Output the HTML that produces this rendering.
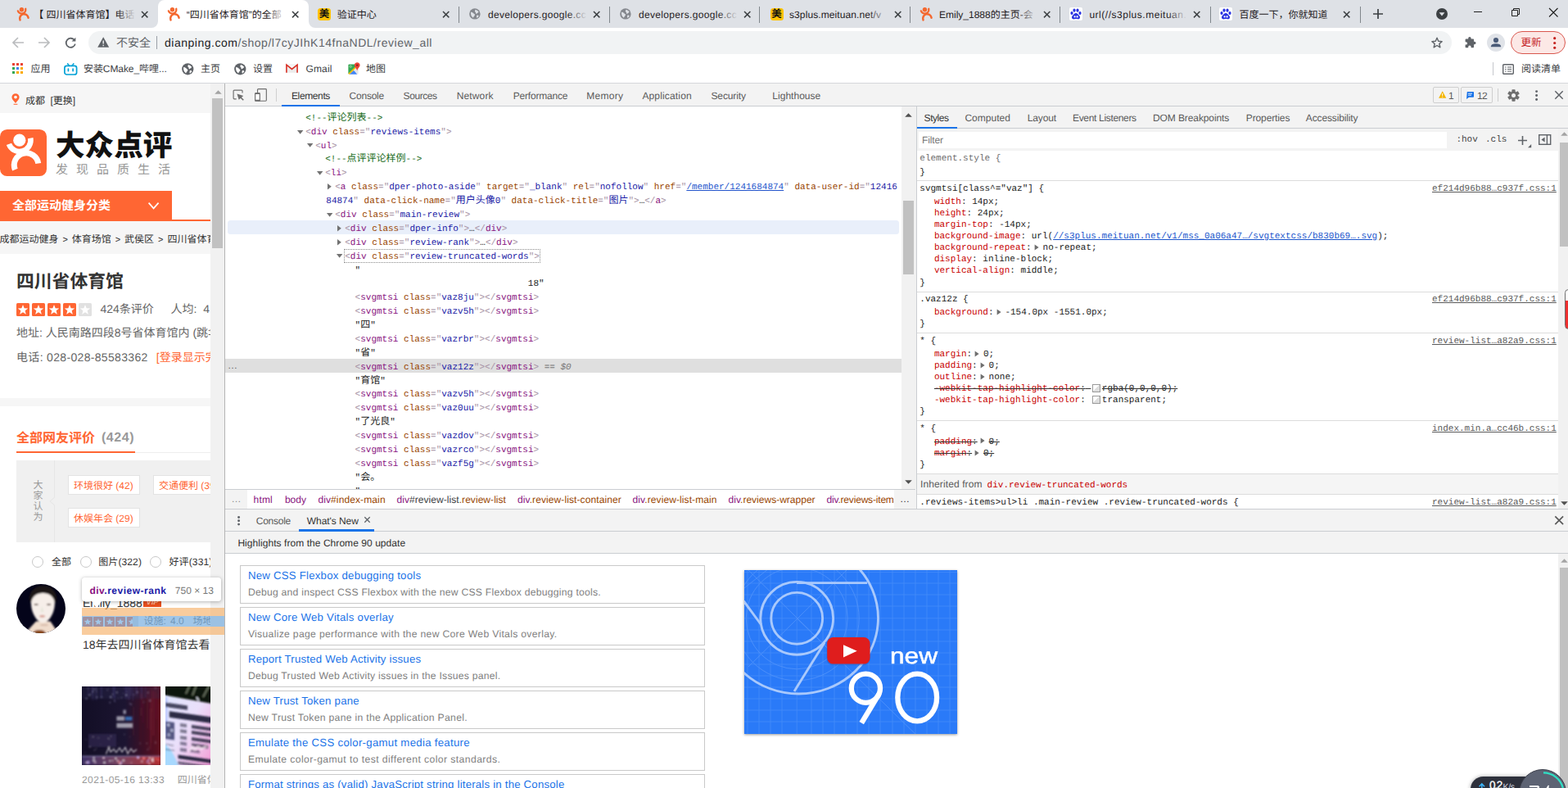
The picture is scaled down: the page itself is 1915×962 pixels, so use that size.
<!DOCTYPE html>
<html><head><meta charset="utf-8"><title>dianping devtools</title>
<style>
*{margin:0;padding:0;box-sizing:border-box}
html,body{width:1915px;height:962px;overflow:hidden;background:#fff}
body{position:relative;text-rendering:geometricPrecision;font-family:"Liberation Sans","Noto Sans CJK SC",sans-serif;font-size:12px;color:#333}
.a{position:absolute}
.t{position:absolute;white-space:nowrap;line-height:1.2;font-family:"Liberation Sans","Noto Sans CJK SC",sans-serif}
.m{position:absolute;white-space:pre;line-height:17px;font-family:"Liberation Mono","Noto Sans CJK SC",monospace;font-size:11px}
svg.i{position:absolute;overflow:visible}
.b{font-weight:bold}
/* devtools syntax colours */
.tg{color:#881280}.an{color:#994500}.av{color:#1a1aa6}.cm{color:#236e25}.br{color:#a894a6}.tx{color:#222}
.pn{color:#c80000}.pv{color:#222}.lk{color:#1a55cc;text-decoration:underline}
.src{color:#5a5a5a;text-decoration:underline}
.st{text-decoration:line-through}

</style></head>
<body>
<div class="a" style="left:0px;top:0px;width:1915px;height:34px;background:#dee1e6;"></div>
<div class="a" style="left:193px;top:0;width:184px;height:34px;background:#fff;border-radius:8px 8px 0 0"></div>
<svg class="i" style="left:185px;top:26px;" width="8" height="8" viewBox="0 0 8 8"><path d="M8 0V8H0A8 8 0 0 0 8 0Z" fill="#fff"/></svg>
<svg class="i" style="left:377px;top:26px;" width="8" height="8" viewBox="0 0 8 8"><path d="M0 0V8H8A8 8 0 0 1 0 0Z" fill="#fff"/></svg>
<div class="a" style="left:0px;top:34px;width:1915px;height:68px;background:#fff;"></div>
<div class="a" style="left:0px;top:101px;width:1915px;height:1px;background:#d5d7db;"></div>
<svg class="i" style="left:18.07px;top:6.71px" width="22" height="22" viewBox="0 0 61.97 61.97"><circle cx="23.8" cy="13.2" r="7.6" fill="#f4682f"/><path d="M10.93 17.89A13.7 13.7 0 0 0 37.27 10.68" fill="none" stroke="#f4682f" stroke-width="6.6" stroke-linecap="round"/><path d="M18.38 49.14A14.8 14.8 0 1 1 46.74 41.41" fill="none" stroke="#f4682f" stroke-width="7" stroke-linecap="round"/></svg>
<div class="a" style="left:44.5px;top:8px;width:121.5px;height:20px;overflow:hidden"><span class="t" style="left:0;top:2.64px;color:#1f2023;letter-spacing:0px"><span style="position:relative;left:-3.2px">【</span>四川省体育馆】电话</span><div class="a" style="right:0;top:0;width:24px;height:20px;background:linear-gradient(90deg,rgba(222,225,230,0),rgba(222,225,230,1))"></div></div>
<svg class="i" style="left:173.3px;top:13.6px;" width="7.4" height="7.4" viewBox="0 0 7.4 7.4"><path d="M0 0L7.4 7.4M7.4 0L0 7.4" stroke="#3c4043" stroke-width="1.5" fill="none"/></svg>
<svg class="i" style="left:201.97px;top:6.71px" width="22" height="22" viewBox="0 0 61.97 61.97"><circle cx="23.8" cy="13.2" r="7.6" fill="#f4682f"/><path d="M10.93 17.89A13.7 13.7 0 0 0 37.27 10.68" fill="none" stroke="#f4682f" stroke-width="6.6" stroke-linecap="round"/><path d="M18.38 49.14A14.8 14.8 0 1 1 46.74 41.41" fill="none" stroke="#f4682f" stroke-width="7" stroke-linecap="round"/></svg>
<div class="a" style="left:227.7px;top:8px;width:121.3px;height:20px;overflow:hidden"><span class="t" style="left:0;top:2.64px;color:#1f2023;letter-spacing:0px">“四川省体育馆”的全部</span><div class="a" style="right:0;top:0;width:24px;height:20px;background:linear-gradient(90deg,rgba(255,255,255,0),rgba(255,255,255,1))"></div></div>
<svg class="i" style="left:357.3px;top:13.6px;" width="7.4" height="7.4" viewBox="0 0 7.4 7.4"><path d="M0 0L7.4 7.4M7.4 0L0 7.4" stroke="#3c4043" stroke-width="1.5" fill="none"/></svg>
<svg class="i" style="left:388px;top:10px;" width="16" height="15" viewBox="0 0 16 15"><rect x="0" y="0" width="16" height="15" rx="3.5" fill="#ffc300"/></svg><span class="t" style="left:389.8px;top:9.75px;font-size:12.5px;color:#111;font-weight:bold">美</span>
<div class="a" style="left:411.7px;top:8px;width:118.3px;height:20px;overflow:hidden"><span class="t" style="left:0;top:2.64px;color:#1f2023;letter-spacing:0px">验证中心</span><div class="a" style="right:0;top:0;width:24px;height:20px;background:linear-gradient(90deg,rgba(222,225,230,0),rgba(222,225,230,1))"></div></div>
<svg class="i" style="left:541.3px;top:13.6px;" width="7.4" height="7.4" viewBox="0 0 7.4 7.4"><path d="M0 0L7.4 7.4M7.4 0L0 7.4" stroke="#3c4043" stroke-width="1.5" fill="none"/></svg>
<svg class="i" style="left:573px;top:9.6px;" width="13.8" height="13.8" viewBox="0 0 15 15"><circle cx="7.5" cy="7.5" r="7.3" fill="#85888e"/><path d="M2.2 5.2C4 5 5.5 6.2 6.2 7.4C7.5 7.6 8 8.8 7.2 9.8C6.6 10.8 5.6 11.4 5.4 12.8C3.6 11.8 2.2 9.6 2.2 7.4Z" fill="#dee1e6"/><path d="M8.2 2C9.8 2.4 11.6 3.4 12.6 5.2C12 6.2 10.6 6.2 10.2 7.4C9 7.6 8.4 6.6 8.8 5.6C8 5.2 7.4 4.6 7.6 3.6Z" fill="#dee1e6"/><path d="M10.4 9.2C11.4 9 12.4 9.4 12.8 10.2C12.2 11.4 11.2 12.4 10 12.8C9.6 11.6 9.8 10.2 10.4 9.2Z" fill="#dee1e6"/></svg>
<div class="a" style="left:596px;top:8px;width:121px;height:20px;overflow:hidden"><span class="t" style="left:0;top:2.64px;color:#1f2023;letter-spacing:0.33px">developers.google.cc</span><div class="a" style="right:0;top:0;width:24px;height:20px;background:linear-gradient(90deg,rgba(222,225,230,0),rgba(222,225,230,1))"></div></div>
<svg class="i" style="left:725.1px;top:13.6px;" width="7.4" height="7.4" viewBox="0 0 7.4 7.4"><path d="M0 0L7.4 7.4M7.4 0L0 7.4" stroke="#3c4043" stroke-width="1.5" fill="none"/></svg>
<svg class="i" style="left:757.4px;top:9.6px;" width="13.8" height="13.8" viewBox="0 0 15 15"><circle cx="7.5" cy="7.5" r="7.3" fill="#85888e"/><path d="M2.2 5.2C4 5 5.5 6.2 6.2 7.4C7.5 7.6 8 8.8 7.2 9.8C6.6 10.8 5.6 11.4 5.4 12.8C3.6 11.8 2.2 9.6 2.2 7.4Z" fill="#dee1e6"/><path d="M8.2 2C9.8 2.4 11.6 3.4 12.6 5.2C12 6.2 10.6 6.2 10.2 7.4C9 7.6 8.4 6.6 8.8 5.6C8 5.2 7.4 4.6 7.6 3.6Z" fill="#dee1e6"/><path d="M10.4 9.2C11.4 9 12.4 9.4 12.8 10.2C12.2 11.4 11.2 12.4 10 12.8C9.6 11.6 9.8 10.2 10.4 9.2Z" fill="#dee1e6"/></svg>
<div class="a" style="left:780px;top:8px;width:121px;height:20px;overflow:hidden"><span class="t" style="left:0;top:2.64px;color:#1f2023;letter-spacing:0.33px">developers.google.cc</span><div class="a" style="right:0;top:0;width:24px;height:20px;background:linear-gradient(90deg,rgba(222,225,230,0),rgba(222,225,230,1))"></div></div>
<svg class="i" style="left:909.1px;top:13.6px;" width="7.4" height="7.4" viewBox="0 0 7.4 7.4"><path d="M0 0L7.4 7.4M7.4 0L0 7.4" stroke="#3c4043" stroke-width="1.5" fill="none"/></svg>
<svg class="i" style="left:940.5px;top:10px;" width="16" height="15" viewBox="0 0 16 15"><rect x="0" y="0" width="16" height="15" rx="3.5" fill="#ffc300"/></svg><span class="t" style="left:942.3px;top:9.75px;font-size:12.5px;color:#111;font-weight:bold">美</span>
<div class="a" style="left:964px;top:8px;width:121px;height:20px;overflow:hidden"><span class="t" style="left:0;top:2.64px;color:#1f2023;letter-spacing:0.1px">s3plus.meituan.net/v</span><div class="a" style="right:0;top:0;width:24px;height:20px;background:linear-gradient(90deg,rgba(222,225,230,0),rgba(222,225,230,1))"></div></div>
<svg class="i" style="left:1092.8px;top:13.6px;" width="7.4" height="7.4" viewBox="0 0 7.4 7.4"><path d="M0 0L7.4 7.4M7.4 0L0 7.4" stroke="#3c4043" stroke-width="1.5" fill="none"/></svg>
<svg class="i" style="left:1121.27px;top:6.71px" width="22" height="22" viewBox="0 0 61.97 61.97"><circle cx="23.8" cy="13.2" r="7.6" fill="#f4682f"/><path d="M10.93 17.89A13.7 13.7 0 0 0 37.27 10.68" fill="none" stroke="#f4682f" stroke-width="6.6" stroke-linecap="round"/><path d="M18.38 49.14A14.8 14.8 0 1 1 46.74 41.41" fill="none" stroke="#f4682f" stroke-width="7" stroke-linecap="round"/></svg>
<div class="a" style="left:1147px;top:8px;width:120px;height:20px;overflow:hidden"><span class="t" style="left:0;top:2.64px;color:#1f2023;letter-spacing:0px">Emily_1888的主页-会</span><div class="a" style="right:0;top:0;width:24px;height:20px;background:linear-gradient(90deg,rgba(222,225,230,0),rgba(222,225,230,1))"></div></div>
<svg class="i" style="left:1275.3px;top:13.6px;" width="7.4" height="7.4" viewBox="0 0 7.4 7.4"><path d="M0 0L7.4 7.4M7.4 0L0 7.4" stroke="#3c4043" stroke-width="1.5" fill="none"/></svg>
<svg class="i" style="left:1306px;top:9px;" width="16" height="16" viewBox="0 0 16 16"><rect width="16" height="16" rx="2" fill="#fff"/><ellipse cx="3" cy="7" rx="1.6" ry="2.1" fill="#2932e1"/><ellipse cx="13" cy="7" rx="1.6" ry="2.1" fill="#2932e1"/><ellipse cx="6" cy="3.6" rx="1.6" ry="2.2" fill="#2932e1"/><ellipse cx="10" cy="3.6" rx="1.6" ry="2.2" fill="#2932e1"/><path d="M8 7C10 7 11 9 12.4 10.6C13.6 12 13 14.4 10.8 14.4C9.6 14.4 9 14 8 14C7 14 6.4 14.4 5.2 14.4C3 14.4 2.4 12 3.6 10.6C5 9 6 7 8 7Z" fill="#2932e1"/><circle cx="6.6" cy="11.4" r="1.1" fill="#fff"/><rect x="8.6" y="10.2" width="2" height="2.4" rx=".6" fill="#fff"/></svg>
<div class="a" style="left:1330.4px;top:8px;width:119.6px;height:20px;overflow:hidden"><span class="t" style="left:0;top:2.64px;color:#1f2023;letter-spacing:0.52px">url(//s3plus.meituan.</span><div class="a" style="right:0;top:0;width:24px;height:20px;background:linear-gradient(90deg,rgba(222,225,230,0),rgba(222,225,230,1))"></div></div>
<svg class="i" style="left:1458.3px;top:13.6px;" width="7.4" height="7.4" viewBox="0 0 7.4 7.4"><path d="M0 0L7.4 7.4M7.4 0L0 7.4" stroke="#3c4043" stroke-width="1.5" fill="none"/></svg>
<svg class="i" style="left:1489.4px;top:9px;" width="16" height="16" viewBox="0 0 16 16"><rect width="16" height="16" rx="2" fill="#fff"/><ellipse cx="3" cy="7" rx="1.6" ry="2.1" fill="#2932e1"/><ellipse cx="13" cy="7" rx="1.6" ry="2.1" fill="#2932e1"/><ellipse cx="6" cy="3.6" rx="1.6" ry="2.2" fill="#2932e1"/><ellipse cx="10" cy="3.6" rx="1.6" ry="2.2" fill="#2932e1"/><path d="M8 7C10 7 11 9 12.4 10.6C13.6 12 13 14.4 10.8 14.4C9.6 14.4 9 14 8 14C7 14 6.4 14.4 5.2 14.4C3 14.4 2.4 12 3.6 10.6C5 9 6 7 8 7Z" fill="#2932e1"/><circle cx="6.6" cy="11.4" r="1.1" fill="#fff"/><rect x="8.6" y="10.2" width="2" height="2.4" rx=".6" fill="#fff"/></svg>
<div class="a" style="left:1513.4px;top:8px;width:126.6px;height:20px;overflow:hidden"><span class="t" style="left:0;top:2.64px;color:#1f2023;letter-spacing:0px">百度一下，你就知道</span><div class="a" style="right:0;top:0;width:24px;height:20px;background:linear-gradient(90deg,rgba(222,225,230,0),rgba(222,225,230,1))"></div></div>
<svg class="i" style="left:1641.1px;top:13.6px;" width="7.4" height="7.4" viewBox="0 0 7.4 7.4"><path d="M0 0L7.4 7.4M7.4 0L0 7.4" stroke="#3c4043" stroke-width="1.5" fill="none"/></svg>
<div class="a" style="left:560.3px;top:7.5px;width:1px;height:20px;background:#80868b;"></div>
<div class="a" style="left:743.75px;top:7.5px;width:1px;height:20px;background:#80868b;"></div>
<div class="a" style="left:927.2px;top:7.5px;width:1px;height:20px;background:#80868b;"></div>
<div class="a" style="left:1110.65px;top:7.5px;width:1px;height:20px;background:#80868b;"></div>
<div class="a" style="left:1294.1px;top:7.5px;width:1px;height:20px;background:#80868b;"></div>
<div class="a" style="left:1477.55px;top:7.5px;width:1px;height:20px;background:#80868b;"></div>
<div class="a" style="left:1661px;top:7.5px;width:1px;height:20px;background:#80868b;"></div>
<svg class="i" style="left:1676.5px;top:11px;" width="12" height="12" viewBox="0 0 12 12"><path d="M6 0V12M0 6H12" stroke="#3c4043" stroke-width="1.7" fill="none"/></svg>
<svg class="i" style="left:1753.5px;top:10px;" width="14" height="14" viewBox="0 0 14 14"><circle cx="7" cy="7" r="7" fill="#3c4043"/><path d="M3.6 5.2H10.4L7 9.6Z" fill="#dee1e6"/></svg>
<div class="a" style="left:1800px;top:14px;width:10px;height:1px;background:#1f1f1f;"></div>
<svg class="i" style="left:1845.5px;top:9.5px;" width="10" height="10" viewBox="0 0 10 10"><path d="M0.5 2.5H7.5V9.5H0.5ZM2.5 2.5V0.5H9.5V7.5H7.5" stroke="#1f1f1f" stroke-width="1" fill="none"/></svg>
<svg class="i" style="left:1892px;top:9.5px;" width="10.5" height="10.5" viewBox="0 0 10.5 10.5"><path d="M0 0L10.5 10.5M10.5 0L0 10.5" stroke="#1f1f1f" stroke-width="1.1" fill="none"/></svg>
<svg class="i" style="left:15px;top:45px;" width="14" height="14" viewBox="0 0 14 14"><path d="M14 7H1.5M7 1L1 7L7 13" stroke="#babcbe" stroke-width="1.7" fill="none"/></svg>
<svg class="i" style="left:47px;top:45px;" width="14" height="14" viewBox="0 0 14 14"><path d="M0 7H12.5M7 1L13 7L7 13" stroke="#babcbe" stroke-width="1.7" fill="none"/></svg>
<svg class="i" style="left:79px;top:44.5px;" width="14" height="14" viewBox="0 0 14 14"><path d="M12 4.2A5.6 5.6 0 1 0 12.8 8.6" stroke="#5f6368" stroke-width="1.8" fill="none"/><path d="M13.4 0.8V5.6H8.6Z" fill="#5f6368"/></svg>
<div class="a" style="left:108px;top:38px;width:1665px;height:28px;border-radius:14px;background:#f1f3f4"></div>
<svg class="i" style="left:118.6px;top:45px;" width="14.4" height="13" viewBox="0 0 14.4 13"><path d="M7.2 0.3L14.2 12.7H0.2Z" fill="#5f6368"/><path d="M6.5 4.6H7.9V8.6H6.5ZM6.5 9.8H7.9V11.2H6.5Z" fill="#f1f3f4"/></svg>
<span class="t" style="left:142.00px;top:44.05px;font-size:14px;color:#5f6368;">不安全</span>
<div class="a" style="left:191px;top:44px;width:1px;height:16px;background:#9aa0a6;"></div>
<span class="t" style="letter-spacing:0.522px;left:201.00px;top:43.95px;font-size:14px;"><span style="color:#202124">dianping.com</span><span style="color:#5f6368">/shop/l7cyJIhK14fnaNDL/review_all</span></span>
<svg class="i" style="left:1747.5px;top:45px;" width="14" height="14" viewBox="0 0 16 16"><path d="M8 1.4L10 6L15 6.4L11.2 9.7L12.4 14.6L8 12L3.6 14.6L4.8 9.7L1 6.4L6 6Z" stroke="#5f6368" stroke-width="1.6" fill="none" stroke-linejoin="round"/></svg>
<svg class="i" style="left:1786.5px;top:44px;" width="16" height="16" viewBox="0 0 16 16"><path d="M6.2 2.6A1.7 1.7 0 0 1 9.6 2.6V3.4H12.2Q13 3.4 13 4.2V6.8H13.8A1.7 1.7 0 0 1 13.8 10.2H13V13.4Q13 14.2 12.2 14.2H9.6V13.2A1.7 1.7 0 0 0 6.2 13.2V14.2H3.4Q2.6 14.2 2.6 13.4V10.6H3.4A1.7 1.7 0 0 0 3.4 7.2H2.6V4.2Q2.6 3.4 3.4 3.4H6.2Z" fill="#5f6368"/></svg>
<svg class="i" style="left:1816px;top:41px;" width="22" height="22" viewBox="0 0 22 22"><circle cx="11" cy="11" r="11" fill="#e0e3e8"/><circle cx="11" cy="8" r="3.1" fill="#4a5b78"/><path d="M4.8 16.2C4.8 13 8 12.2 11 12.2C14 12.2 17.2 13 17.2 16.2Z" fill="#4a5b78"/></svg>
<div class="a" style="left:1845px;top:38px;width:66.5px;height:28px;border-radius:14px;border:1px solid #d9574e;background:#fce8e6"></div>
<span class="t" style="left:1857.60px;top:44.77px;font-size:12.5px;color:#c5221f;">更新</span>
<svg class="i" style="left:1896.6px;top:44.5px;" width="3.4" height="15" viewBox="0 0 3.4 15"><circle cx="1.7" cy="1.7" r="1.6" fill="#c5221f"/><circle cx="1.7" cy="7.5" r="1.6" fill="#c5221f"/><circle cx="1.7" cy="13.3" r="1.6" fill="#c5221f"/></svg>
<svg class="i" style="left:15px;top:77px;" width="13" height="13" viewBox="0 0 13 13"><rect x="0" y="0" width="3" height="3" fill="#ea4335"/><rect x="5" y="0" width="3" height="3" fill="#ea4335"/><rect x="10" y="0" width="3" height="3" fill="#ea4335"/><rect x="0" y="5" width="3" height="3" fill="#34a853"/><rect x="5" y="5" width="3" height="3" fill="#4285f4"/><rect x="10" y="5" width="3" height="3" fill="#fbab00"/><rect x="0" y="10" width="3" height="3" fill="#34a853"/><rect x="5" y="10" width="3" height="3" fill="#fbab00"/><rect x="10" y="10" width="3" height="3" fill="#fbab00"/></svg>
<span class="t" style="left:37.60px;top:77.24px;color:#3c4043;">应用</span>
<svg class="i" style="left:77.7px;top:76.5px;" width="16.5" height="15" viewBox="0 0 16.5 15"><path d="M4.6 0.8L6.6 3.4M11.9 0.8L9.9 3.4" stroke="#00a1d6" stroke-width="1.5" fill="none" stroke-linecap="round"/><rect x="0.9" y="3.4" width="14.7" height="10.6" rx="2.6" fill="none" stroke="#00a1d6" stroke-width="1.7"/><path d="M5.4 7.2V9.6M11.1 7.2V9.6" stroke="#00a1d6" stroke-width="1.7" stroke-linecap="round"/></svg>
<span class="t" style="letter-spacing:-0.078px;left:102.00px;top:77.24px;color:#3c4043;">安装CMake_哔哩...</span>
<svg class="i" style="left:221.8px;top:77px;" width="14.6" height="14.6" viewBox="0 0 15 15"><circle cx="7.5" cy="7.5" r="7.3" fill="#5f6368"/><path d="M2.2 5.2C4 5 5.5 6.2 6.2 7.4C7.5 7.6 8 8.8 7.2 9.8C6.6 10.8 5.6 11.4 5.4 12.8C3.6 11.8 2.2 9.6 2.2 7.4Z" fill="#fff"/><path d="M8.2 2C9.8 2.4 11.6 3.4 12.6 5.2C12 6.2 10.6 6.2 10.2 7.4C9 7.6 8.4 6.6 8.8 5.6C8 5.2 7.4 4.6 7.6 3.6Z" fill="#fff"/><path d="M10.4 9.2C11.4 9 12.4 9.4 12.8 10.2C12.2 11.4 11.2 12.4 10 12.8C9.6 11.6 9.8 10.2 10.4 9.2Z" fill="#fff"/></svg>
<span class="t" style="left:245.00px;top:77.24px;color:#3c4043;">主页</span>
<svg class="i" style="left:285.8px;top:77px;" width="14.6" height="14.6" viewBox="0 0 15 15"><circle cx="7.5" cy="7.5" r="7.3" fill="#5f6368"/><path d="M2.2 5.2C4 5 5.5 6.2 6.2 7.4C7.5 7.6 8 8.8 7.2 9.8C6.6 10.8 5.6 11.4 5.4 12.8C3.6 11.8 2.2 9.6 2.2 7.4Z" fill="#fff"/><path d="M8.2 2C9.8 2.4 11.6 3.4 12.6 5.2C12 6.2 10.6 6.2 10.2 7.4C9 7.6 8.4 6.6 8.8 5.6C8 5.2 7.4 4.6 7.6 3.6Z" fill="#fff"/><path d="M10.4 9.2C11.4 9 12.4 9.4 12.8 10.2C12.2 11.4 11.2 12.4 10 12.8C9.6 11.6 9.8 10.2 10.4 9.2Z" fill="#fff"/></svg>
<span class="t" style="left:309.00px;top:77.24px;color:#3c4043;">设置</span>
<svg class="i" style="left:349.4px;top:78.4px;" width="15" height="11.2" viewBox="0 0 15 11.2"><rect x="0.6" y="0.4" width="13.8" height="10.4" rx="0.8" fill="#ececec"/><path d="M1.8 1.4L7.5 6L13.2 1.4" fill="#f7f7f7"/><path d="M0.9 10.8V1.1L7.5 6.4L14.1 1.1V10.8" fill="none" stroke="#d93025" stroke-width="1.6" stroke-linejoin="miter"/></svg>
<span class="t" style="letter-spacing:0.131px;left:373.50px;top:77.24px;color:#3c4043;">Gmail</span>
<svg class="i" style="left:424.6px;top:76px;" width="15" height="16" viewBox="0 0 15 16"><path d="M0.4 3.6Q0.4 2.4 1.6 2.4H9V7L0.4 14.2Z" fill="#34a853"/><path d="M12.6 8V13.8Q12.6 14.8 11.6 14.8H10.4L7.4 10.4L9.6 7Z" fill="#e4e6ea"/><path d="M1.6 14.8L7 9.8L11.2 14.8Z" fill="#4285f4"/><path d="M0.9 14.3L9.2 6.4" stroke="#fbbc04" stroke-width="1.7"/><path d="M11.2 0.3C13.1 0.3 14.6 1.8 14.6 3.6C14.6 5.8 12.2 7 11.2 10.2C10.2 7 7.8 5.8 7.8 3.6C7.8 1.8 9.3 0.3 11.2 0.3Z" fill="#ea4335"/><circle cx="11.2" cy="3.6" r="1.2" fill="#8c1d18"/><circle cx="3.2" cy="5.2" r="1.2" fill="none" stroke="#b7e1c2" stroke-width=".7"/></svg>
<span class="t" style="left:447.00px;top:77.24px;color:#3c4043;">地图</span>
<div class="a" style="left:1823px;top:76px;width:1px;height:16px;background:#c4c7cc;"></div>
<svg class="i" style="left:1835px;top:77.5px;" width="14" height="13" viewBox="0 0 14 13"><rect x="0.7" y="0.7" width="12.6" height="11.6" rx="1" fill="none" stroke="#5f6368" stroke-width="1.4"/><path d="M3 4H4.6M6 4H11M3 6.5H4.6M6 6.5H11M3 9H4.6M6 9H11" stroke="#5f6368" stroke-width="1.2"/></svg>
<span class="t" style="left:1858.00px;top:77.24px;color:#3c4043;">阅读清单</span>
<div class="a" style="left:0;top:102px;width:257px;height:860px;overflow:hidden;background:#fff">
<div class="a" style="left:0;top:-102px;width:257px;height:962px">
<div class="a" style="left:0px;top:102px;width:257px;height:36px;background:#f6f6f6;"></div>
<svg class="i" style="left:13.5px;top:113.8px;" width="10" height="14" viewBox="0 0 10 14"><path d="M5 0.2C7.6 0.2 9.6 2.2 9.6 4.7C9.6 7.4 6.6 9.6 5 12C3.4 9.6 0.4 7.4 0.4 4.7C0.4 2.2 2.4 0.2 5 0.2Z" fill="#f63"/><circle cx="5" cy="4.6" r="1.9" fill="#f6f6f6"/><path d="M2.6 13.3H7.4" stroke="#f63" stroke-width="1"/></svg>
<span class="t" style="left:31.00px;top:115.84px;color:#333;">成都</span>
<span class="t" style="left:61.40px;top:115.84px;color:#333;">[更换]</span>
<div class="a" style="left:0;top:157.8px;width:57.3px;height:57.2px;border-radius:8.6px;background:#f63"></div>
<svg class="i" style="left:0px;top:157.8px;" width="57.3" height="57.2" viewBox="0 0 57.3 57.2"><circle cx="23.8" cy="13.2" r="7.6" fill="#fff"/><path d="M10.93 17.89A13.7 13.7 0 0 0 37.27 10.68" fill="none" stroke="#fff" stroke-width="6.6" stroke-linecap="butt"/><path d="M18.38 49.14A14.8 14.8 0 1 1 46.74 41.41" fill="none" stroke="#fff" stroke-width="7" stroke-linecap="butt"/></svg>
<span class="t" style="left:68.00px;top:156.80px;font-size:35.6px;color:#111;font-weight:900;">大众点评</span>
<span class="t" style="left:68.00px;top:199.10px;font-size:15px;color:#999;letter-spacing:0.665em;">发现品质生活</span>
<div class="a" style="left:0px;top:233px;width:210px;height:35px;background:#f63;"></div>
<div class="a" style="left:0px;top:268px;width:257px;height:2px;background:#f63;"></div>
<span class="t" style="left:15.00px;top:243.20px;font-size:15px;color:#fff;font-weight:bold;">全部运动健身分类</span>
<svg class="i" style="left:180.6px;top:247px;" width="13.2" height="8.6" viewBox="0 0 13.2 8.6"><path d="M0.6 0.6L6.6 7.4L12.6 0.6" stroke="#fff" stroke-width="1.7" fill="none"/></svg>
<div class="a" style="left:0px;top:270px;width:257px;height:40px;background:#f6f6f6;"></div>
<span class="t" style="left:-0.50px;top:284.64px;color:#333;word-spacing:1.6px">成都运动健身 <span style="font-size:11px">&gt;</span> 体育场馆 <span style="font-size:11px">&gt;</span> 武侯区 <span style="font-size:11px">&gt;</span> 四川省体育馆</span>
<span class="t" style="left:20.00px;top:330.67px;font-size:21.8px;color:#333;font-weight:bold;">四川省体育馆</span>
<svg class="i" style="left:20px;top:370px;" width="16" height="16" viewBox="0 0 16 16"><rect width="16" height="16" rx="1.5" fill="#f63"/><path d="M8.00 2.00L9.65 6.23L14.18 6.49L10.66 9.37L11.82 13.76L8.00 11.30L4.18 13.76L5.34 9.37L1.82 6.49L6.35 6.23Z" fill="#fff"/></svg>
<svg class="i" style="left:39px;top:370px;" width="16" height="16" viewBox="0 0 16 16"><rect width="16" height="16" rx="1.5" fill="#f63"/><path d="M8.00 2.00L9.65 6.23L14.18 6.49L10.66 9.37L11.82 13.76L8.00 11.30L4.18 13.76L5.34 9.37L1.82 6.49L6.35 6.23Z" fill="#fff"/></svg>
<svg class="i" style="left:58px;top:370px;" width="16" height="16" viewBox="0 0 16 16"><rect width="16" height="16" rx="1.5" fill="#f63"/><path d="M8.00 2.00L9.65 6.23L14.18 6.49L10.66 9.37L11.82 13.76L8.00 11.30L4.18 13.76L5.34 9.37L1.82 6.49L6.35 6.23Z" fill="#fff"/></svg>
<svg class="i" style="left:77px;top:370px;" width="16" height="16" viewBox="0 0 16 16"><rect width="16" height="16" rx="1.5" fill="#f63"/><path d="M8.00 2.00L9.65 6.23L14.18 6.49L10.66 9.37L11.82 13.76L8.00 11.30L4.18 13.76L5.34 9.37L1.82 6.49L6.35 6.23Z" fill="#fff"/></svg>
<svg class="i" style="left:96px;top:370px;" width="16" height="16" viewBox="0 0 16 16"><rect width="16" height="16" rx="1.5" fill="#e1e1e1"/><path d="M8.00 2.00L9.65 6.23L14.18 6.49L10.66 9.37L11.82 13.76L8.00 11.30L4.18 13.76L5.34 9.37L1.82 6.49L6.35 6.23Z" fill="#fff"/></svg>
<span class="t" style="left:122.50px;top:369.35px;font-size:14px;color:#666;">424条评价</span>
<span class="t" style="left:208.50px;top:369.35px;font-size:14px;color:#666;">人均:&nbsp;&nbsp;4</span>
<span class="t" style="left:20.00px;top:397.75px;font-size:14px;color:#666;">地址: 人民南路四段8号省体育馆内 (跳伞塔</span>
<span class="t" style="letter-spacing:0.327px;left:20.00px;top:428.15px;font-size:14px;color:#666;">电话: 028-028-85583362</span>
<span class="t" style="left:190.80px;top:428.15px;font-size:14px;color:#f63;">[登录显示完整</span>
<div class="a" style="left:0px;top:486px;width:257px;height:10px;background:#f6f6f6;"></div>
<span class="t" style="left:20.00px;top:526.36px;font-size:16px;color:#f63;font-weight:bold;">全部网友评价</span>
<span class="t b" style="letter-spacing:0.528px;left:124.00px;top:525.26px;font-size:16px;color:#999;">(424)</span>
<div class="a" style="left:20px;top:552px;width:237px;height:1px;background:#eee;"></div>
<div class="a" style="left:20px;top:551px;width:145px;height:2px;background:#f63;"></div>
<div class="a" style="left:20px;top:562px;width:237px;height:100px;background:#f0f0f0;"></div>
<div class="a" style="left:66px;top:562px;width:1px;height:100px;background:#e6e6e6;"></div>
<svg class="i" style="left:60px;top:606px;" width="7" height="12" viewBox="0 0 7 12"><path d="M7 0L0.5 6L7 12Z" fill="#e6e6e6"/><path d="M7.2 1.2L1.8 6L7.2 10.8Z" fill="#f0f0f0"/></svg>
<span class="t" style="left:40.60px;top:585.04px;color:#999;">大</span>
<span class="t" style="left:40.60px;top:598.04px;color:#999;">家</span>
<span class="t" style="left:40.60px;top:611.04px;color:#999;">认</span>
<span class="t" style="left:40.60px;top:624.04px;color:#999;">为</span>
<div class="a" style="left:83.3px;top:580.3px;width:87.4px;height:23.4px;background:#fff;border:1px solid #e3e3e3"></div>
<span class="t" style="left:90.00px;top:585.64px;color:#f63;">环境很好 (42)</span>
<div class="a" style="left:187.2px;top:580.3px;width:87.4px;height:23.4px;background:#fff;border:1px solid #e3e3e3"></div>
<span class="t" style="left:193.90px;top:585.64px;color:#f63;">交通便利 (39)</span>
<div class="a" style="left:83.3px;top:620.4px;width:87.4px;height:23.4px;background:#fff;border:1px solid #e3e3e3"></div>
<span class="t" style="left:90.00px;top:625.74px;color:#f63;">休娱年会 (29)</span>
<div class="a" style="left:39.4px;top:678.6px;width:14px;height:14px;border-radius:7px;border:1px solid #c8c8c8;background:#fff"></div>
<div class="a" style="left:97.6px;top:678.6px;width:14px;height:14px;border-radius:7px;border:1px solid #c8c8c8;background:#fff"></div>
<div class="a" style="left:183.4px;top:678.6px;width:14px;height:14px;border-radius:7px;border:1px solid #c8c8c8;background:#fff"></div>
<span class="t" style="left:62.90px;top:678.94px;color:#333;">全部</span>
<span class="t" style="letter-spacing:0.117px;left:120.20px;top:678.94px;color:#333;">图片(322)</span>
<span class="t" style="letter-spacing:0.117px;left:206.50px;top:678.94px;color:#333;">好评(331)</span>
<svg class="i" style="left:20px;top:712.9px" width="60" height="60" viewBox="0 0 60 60"><defs><clipPath id="avc"><circle cx="30" cy="30" r="30"/></clipPath><filter id="avb" x="-20%" y="-20%" width="140%" height="140%"><feGaussianBlur stdDeviation="1.15"/></filter></defs><g clip-path="url(#avc)"><rect width="60" height="60" fill="#04041a"/><g filter="url(#avb)"><ellipse cx="32.5" cy="17" rx="16.5" ry="15" fill="#1b1514"/><path d="M7 64L24 45.5L41.5 45.5L54 64Z" fill="#f1ddcd"/><path d="M18 24C18 6.5 46.8 6.5 46.8 24C46.8 34.5 40 47.2 32.4 47.2C25 47.2 18 34.5 18 24Z" fill="#f6eee9"/><ellipse cx="32.5" cy="7.6" rx="11" ry="3" fill="#1f1816"/><ellipse cx="24.2" cy="25" rx="2.6" ry="1.1" fill="#5c463c"/><ellipse cx="39.6" cy="25" rx="2.6" ry="1.1" fill="#5c463c"/><ellipse cx="31.6" cy="39.2" rx="3.4" ry="1.5" fill="#d9a296"/><path d="M31 27L29.6 34H33.6Z" fill="#e6e6da"/><ellipse cx="34" cy="50" rx="5" ry="1.2" fill="#cfae9c" opacity=".7"/><ellipse cx="28" cy="59.5" rx="7.5" ry="3.6" fill="#8a4719"/></g></g></svg>
<span class="t" style="letter-spacing:-0.016px;left:100.90px;top:727.75px;font-size:14px;color:#333;">Emily_1888</span>
<div class="a" style="left:175px;top:727px;width:22px;height:14.2px;background:#e9501e;"></div>
<span class="t b" style="left:178.40px;top:729.61px;font-size:9.5px;color:#ffb89a;font-style:italic">VIP</span>
<span class="t" style="left:100.90px;top:778.95px;font-size:14px;color:#333;">18年去四川省体育馆去看</span>
<svg class="i" style="left:100px;top:838px;overflow:hidden" width="96" height="96" viewBox="0 0 96 96"><defs><filter id="pb1" x="-10%" y="-10%" width="120%" height="120%"><feGaussianBlur stdDeviation="1.1"/></filter><linearGradient id="p1g" x1="0" x2="1" y1="0" y2="0"><stop offset="0" stop-color="#120e25"/><stop offset=".55" stop-color="#1c1531"/><stop offset=".78" stop-color="#3c1026"/><stop offset="1" stop-color="#5e101f"/></linearGradient><linearGradient id="p1c" x1="0" x2="1" y1="0" y2="0"><stop offset="0" stop-color="#463872"/><stop offset=".5" stop-color="#8a4c68"/><stop offset="1" stop-color="#c23434"/></linearGradient></defs><rect width="96" height="96" fill="url(#p1g)"/><g filter="url(#pb1)"><rect x="0" y="0" width="96" height="15" fill="#2a2652" opacity=".32"/><rect x="72.1" y="0" width="1.6" height="15.2" fill="#4a4680" opacity="0.49"/><rect x="59.3" y="0" width="1.3" height="11.4" fill="#4a4680" opacity="0.45"/><rect x="16.7" y="0" width="1.6" height="16.6" fill="#4a4680" opacity="0.43"/><rect x="37.8" y="0" width="1.5" height="14.1" fill="#4a4680" opacity="0.53"/><rect x="61.7" y="0" width="1.4" height="17.8" fill="#4a4680" opacity="0.30"/><rect x="56.8" y="0" width="1.6" height="16.5" fill="#4a4680" opacity="0.54"/><rect x="53.6" y="0" width="0.9" height="8.5" fill="#4a4680" opacity="0.46"/><rect x="77.0" y="0" width="1.2" height="13.4" fill="#4a4680" opacity="0.31"/><rect x="7.4" y="0" width="1.3" height="10.9" fill="#4a4680" opacity="0.37"/><rect x="39.8" y="0" width="0.9" height="19.2" fill="#4a4680" opacity="0.52"/><rect x="12.8" y="0" width="1.3" height="16.9" fill="#4a4680" opacity="0.42"/><rect x="65.9" y="0" width="1.6" height="10.8" fill="#4a4680" opacity="0.49"/><rect x="23.1" y="0" width="1.4" height="13.5" fill="#4a4680" opacity="0.51"/><rect x="11.7" y="0" width="1.7" height="11.4" fill="#4a4680" opacity="0.31"/><rect x="52.8" y="0" width="1.0" height="15.2" fill="#4a4680" opacity="0.38"/><rect x="54.2" y="0" width="1.5" height="15.5" fill="#4a4680" opacity="0.33"/><circle cx="31.1" cy="4.2" r="0.7" fill="#cfd4ff" opacity="0.38"/><circle cx="50.2" cy="8.7" r="0.4" fill="#cfd4ff" opacity="0.58"/><circle cx="5.4" cy="10.1" r="0.4" fill="#cfd4ff" opacity="0.39"/><circle cx="40.2" cy="18.4" r="0.5" fill="#cfd4ff" opacity="0.45"/><circle cx="58.5" cy="20.9" r="0.7" fill="#cfd4ff" opacity="0.53"/><circle cx="89.9" cy="2.0" r="0.8" fill="#cfd4ff" opacity="0.48"/><circle cx="15.0" cy="3.5" r="0.6" fill="#cfd4ff" opacity="0.72"/><circle cx="18.3" cy="13.2" r="0.7" fill="#cfd4ff" opacity="0.52"/><circle cx="51.3" cy="2.3" r="0.4" fill="#cfd4ff" opacity="0.44"/><circle cx="63.2" cy="10.0" r="0.6" fill="#cfd4ff" opacity="0.61"/><circle cx="42.8" cy="7.3" r="0.8" fill="#cfd4ff" opacity="0.66"/><circle cx="24.0" cy="13.1" r="0.7" fill="#cfd4ff" opacity="0.74"/><circle cx="67.7" cy="7.0" r="0.9" fill="#cfd4ff" opacity="0.40"/><circle cx="39.6" cy="16.9" r="0.5" fill="#cfd4ff" opacity="0.57"/><circle cx="5.5" cy="15.0" r="0.8" fill="#cfd4ff" opacity="0.61"/><circle cx="80.8" cy="7.6" r="0.7" fill="#cfd4ff" opacity="0.62"/><circle cx="54.2" cy="10.6" r="0.8" fill="#cfd4ff" opacity="0.78"/><circle cx="44.7" cy="14.9" r="0.4" fill="#cfd4ff" opacity="0.67"/><circle cx="60.2" cy="21.9" r="0.8" fill="#cfd4ff" opacity="0.48"/><circle cx="36.7" cy="15.0" r="0.4" fill="#cfd4ff" opacity="0.56"/><circle cx="17.1" cy="3.5" r="0.4" fill="#cfd4ff" opacity="0.70"/><circle cx="13.6" cy="6.2" r="0.6" fill="#cfd4ff" opacity="0.74"/><circle cx="9.3" cy="10.4" r="0.7" fill="#cfd4ff" opacity="0.75"/><circle cx="75.7" cy="19.1" r="0.5" fill="#cfd4ff" opacity="0.54"/><circle cx="34.3" cy="19.6" r="0.9" fill="#cfd4ff" opacity="0.42"/><circle cx="17.9" cy="5.9" r="0.5" fill="#cfd4ff" opacity="0.57"/><circle cx="55.0" cy="6.5" r="0.4" fill="#cfd4ff" opacity="0.54"/><circle cx="35.2" cy="12.9" r="0.9" fill="#cfd4ff" opacity="0.66"/><circle cx="48.4" cy="14.0" r="0.7" fill="#cfd4ff" opacity="0.37"/><circle cx="83.0" cy="17.4" r="0.8" fill="#cfd4ff" opacity="0.71"/><circle cx="37.3" cy="9.4" r="0.5" fill="#cfd4ff" opacity="0.64"/><circle cx="7.6" cy="2.4" r="0.5" fill="#cfd4ff" opacity="0.42"/><circle cx="32.6" cy="2.1" r="0.4" fill="#cfd4ff" opacity="0.42"/><circle cx="11.1" cy="8.6" r="0.4" fill="#cfd4ff" opacity="0.74"/><rect x="79.5" y="8.2" width="1.2" height="43.5" fill="#8a2436" opacity="0.27"/><rect x="88.5" y="39.8" width="0.8" height="20.6" fill="#8a2436" opacity="0.33"/><rect x="94.3" y="20.6" width="1.0" height="35.6" fill="#8a2436" opacity="0.36"/><rect x="83.5" y="26.3" width="1.2" height="51.1" fill="#8a2436" opacity="0.44"/><rect x="72.2" y="8.6" width="1.0" height="27.0" fill="#8a2436" opacity="0.42"/><rect x="86.1" y="5.6" width="1.6" height="54.4" fill="#8a2436" opacity="0.41"/><rect x="62.5" y="25.0" width="1.5" height="35.1" fill="#8a2436" opacity="0.21"/><rect x="84.0" y="15.2" width="1.2" height="54.0" fill="#8a2436" opacity="0.35"/><rect x="84.9" y="1.8" width="0.9" height="29.4" fill="#8a2436" opacity="0.20"/><rect x="74.0" y="13.2" width="1.6" height="31.3" fill="#8a2436" opacity="0.21"/><rect x="91.1" y="8.7" width="0.9" height="31.7" fill="#8a2436" opacity="0.22"/><rect x="71.2" y="26.2" width="1.0" height="47.2" fill="#8a2436" opacity="0.22"/><rect x="89.0" y="5.8" width="1.3" height="33.8" fill="#8a2436" opacity="0.27"/><rect x="82.8" y="3.4" width="1.6" height="49.9" fill="#8a2436" opacity="0.24"/><rect x="8" y="58" width="34" height="16" fill="#3d3064" opacity=".45"/><circle cx="58.5" cy="61.6" r="0.5" fill="#e8dff0" opacity="0.30"/><circle cx="35.5" cy="60.9" r="0.7" fill="#e8dff0" opacity="0.50"/><circle cx="44.9" cy="69.6" r="0.4" fill="#e8dff0" opacity="0.23"/><circle cx="33.5" cy="64.4" r="0.7" fill="#e8dff0" opacity="0.25"/><circle cx="4.1" cy="80.8" r="0.6" fill="#e8dff0" opacity="0.24"/><circle cx="52.0" cy="58.6" r="0.6" fill="#e8dff0" opacity="0.49"/><circle cx="81.4" cy="74.7" r="0.5" fill="#e8dff0" opacity="0.31"/><circle cx="17.4" cy="76.5" r="0.6" fill="#e8dff0" opacity="0.43"/><circle cx="32.3" cy="63.4" r="0.7" fill="#e8dff0" opacity="0.50"/><circle cx="80.4" cy="77.3" r="0.7" fill="#e8dff0" opacity="0.42"/><circle cx="22.9" cy="70.4" r="0.5" fill="#e8dff0" opacity="0.21"/><circle cx="4.6" cy="64.7" r="0.5" fill="#e8dff0" opacity="0.41"/><circle cx="90.0" cy="68.7" r="0.8" fill="#e8dff0" opacity="0.50"/><circle cx="89.9" cy="66.8" r="0.5" fill="#e8dff0" opacity="0.27"/><circle cx="20.1" cy="62.9" r="0.6" fill="#e8dff0" opacity="0.47"/><circle cx="79.3" cy="69.5" r="0.7" fill="#e8dff0" opacity="0.44"/><circle cx="9.8" cy="73.9" r="0.8" fill="#e8dff0" opacity="0.43"/><circle cx="71.0" cy="69.5" r="0.5" fill="#e8dff0" opacity="0.44"/><circle cx="32.6" cy="77.2" r="0.8" fill="#e8dff0" opacity="0.32"/><circle cx="38.9" cy="80.7" r="0.7" fill="#e8dff0" opacity="0.25"/><circle cx="13.7" cy="61.6" r="0.8" fill="#e8dff0" opacity="0.44"/><circle cx="15.4" cy="77.8" r="0.8" fill="#e8dff0" opacity="0.40"/><rect x="50.4" y="28.6" width="3.6" height="5" fill="#e6e6f6" opacity=".55"/><rect x="42.4" y="36.4" width="9.6" height="5.4" fill="#eeeef8" opacity=".6"/><rect x="53" y="36.8" width="8.4" height="4.8" fill="#3f8ee6" opacity=".7"/><rect x="42.4" y="44.8" width="19.6" height="5.8" fill="#f2f2fa" opacity=".62"/><path d="M29.5 82.5L33 74L35 80L39 76.5L42 80.5L46 75L49 80L53 74.5L56 82L60 76L63 80L67 77" fill="none" stroke="#f4f0f4" stroke-width="1.1" opacity=".85"/><rect x="0" y="85" width="96" height="11" fill="url(#p1c)" opacity=".85"/><rect x="0" y="84.4" width="96" height="1.6" fill="#8d86b8" opacity=".55"/><circle cx="34.2" cy="90.9" r="0.9" fill="#fff" opacity="0.76"/><circle cx="68.8" cy="86.9" r="1.5" fill="#f0d0e0" opacity="0.60"/><circle cx="82.2" cy="93.4" r="1.0" fill="#ff8080" opacity="0.50"/><circle cx="48.1" cy="92.9" r="1.1" fill="#c8b0ff" opacity="0.78"/><circle cx="7.6" cy="92.7" r="1.7" fill="#c8b0ff" opacity="0.77"/><circle cx="82.8" cy="87.2" r="1.0" fill="#fff" opacity="0.79"/><circle cx="73.4" cy="91.5" r="1.6" fill="#f0d0e0" opacity="0.48"/><circle cx="45.6" cy="92.5" r="1.4" fill="#ff8080" opacity="0.71"/><circle cx="50.8" cy="90.3" r="1.6" fill="#fff" opacity="0.51"/><circle cx="27.5" cy="93.0" r="1.3" fill="#fff" opacity="0.74"/><circle cx="85.9" cy="90.0" r="1.4" fill="#f0d0e0" opacity="0.71"/><circle cx="43.6" cy="90.8" r="1.3" fill="#f0d0e0" opacity="0.71"/><circle cx="82.6" cy="94.5" r="1.1" fill="#f0d0e0" opacity="0.78"/><circle cx="14.6" cy="87.1" r="1.2" fill="#fff" opacity="0.70"/><circle cx="41.4" cy="87.9" r="1.1" fill="#fff" opacity="0.80"/><circle cx="16.2" cy="92.4" r="1.5" fill="#f0d0e0" opacity="0.51"/><circle cx="14.6" cy="90.2" r="1.5" fill="#fff" opacity="0.58"/><circle cx="46.8" cy="94.9" r="1.6" fill="#f0d0e0" opacity="0.72"/><circle cx="93.5" cy="89.6" r="1.2" fill="#ff8080" opacity="0.54"/><circle cx="68.4" cy="86.2" r="1.4" fill="#c8b0ff" opacity="0.72"/><circle cx="37.4" cy="90.7" r="1.1" fill="#fff" opacity="0.45"/><circle cx="86.5" cy="88.1" r="1.7" fill="#fff" opacity="0.52"/><circle cx="5.6" cy="93.0" r="1.1" fill="#f0d0e0" opacity="0.77"/><circle cx="80.2" cy="92.1" r="1.7" fill="#c8b0ff" opacity="0.47"/><circle cx="86.6" cy="91.1" r="1.5" fill="#fff" opacity="0.53"/><circle cx="75.6" cy="87.7" r="1.7" fill="#ff8080" opacity="0.82"/><circle cx="60.4" cy="93.2" r="0.9" fill="#f0d0e0" opacity="0.43"/><circle cx="81.4" cy="90.1" r="1.1" fill="#c8b0ff" opacity="0.82"/><circle cx="26.6" cy="87.2" r="1.3" fill="#f0d0e0" opacity="0.82"/><circle cx="91.2" cy="88.4" r="1.0" fill="#ff8080" opacity="0.68"/></g></svg>
<svg class="i" style="left:202px;top:838px;overflow:hidden" width="55" height="96" viewBox="0 0 55 96"><defs><filter id="pb2" x="-10%" y="-10%" width="120%" height="120%"><feGaussianBlur stdDeviation="0.95"/></filter><linearGradient id="p2g" x1="0" y1="0" x2="1" y2="1"><stop offset="0" stop-color="#dfe6ff"/><stop offset=".5" stop-color="#eadffa"/><stop offset=".85" stop-color="#f0b4e2"/><stop offset="1" stop-color="#f39ad6"/></linearGradient></defs><rect width="55" height="96" fill="url(#p2g)"/><g filter="url(#pb2)"><path d="M-2 98V70Q9 76 16 98Z" fill="#9bd8ff" opacity=".85"/><path d="M-2 12V60H3V14Z" fill="#bcc8ff" opacity=".8"/><path d="M-2 -2H57V21L-2 10.4Z" fill="#11150d"/><path d="M30 -2L25 9M38 -2L33 11M54 -2L46 13" stroke="#74806c" stroke-width="2.2" opacity=".8"/><path d="M38 13L41 17.4" stroke="#e8ecf8" stroke-width="1.6"/><g transform="skewY(8)" fill="#1b1b36"><rect x="0" y="19.6" width="27" height="5.4" opacity=".78"/><rect x="4.6" y="29.6" width="52" height="7.4" opacity=".93"/><rect x="0" y="42.4" width="11" height="21.6" fill="#2a3060" opacity=".78"/><rect x="2" y="45" width="3" height="3" fill="#dfe6ff" opacity=".7"/><rect x="6.5" y="51" width="2.6" height="3" fill="#dfe6ff" opacity=".7"/><rect x="2.6" y="57" width="3" height="3" fill="#dfe6ff" opacity=".6"/><rect x="18" y="42.4" width="8" height="4" opacity=".55"/><rect x="32" y="42.4" width="25" height="4" opacity=".8"/><rect x="18" y="49.6" width="8" height="4" opacity=".55"/><rect x="32" y="49.6" width="25" height="4" opacity=".8"/><rect x="18" y="57.6" width="8" height="4" opacity=".55"/><rect x="32" y="57.6" width="25" height="4" opacity=".8"/><rect x="18" y="64.8" width="8" height="4" opacity=".5"/><rect x="32" y="64.8" width="20" height="4" opacity=".6"/><rect x="18" y="72.4" width="8" height="4" opacity=".5"/><rect x="30" y="72.4" width="12" height="3.4" opacity=".45"/><rect x="0" y="70" width="10" height="1.6" opacity=".4"/><rect x="0" y="76" width="11" height="1.6" opacity=".4"/><rect x="15.6" y="81.4" width="42" height="4.4" opacity=".95"/><rect x="15" y="89.2" width="42" height="3.6" opacity=".6"/></g><path d="M29 78L33 74L36 77L40 73.6L44 76.6L50 73" fill="none" stroke="#fff" stroke-width="1.3" opacity=".85"/></g></svg>
<span class="t" style="letter-spacing:0.391px;left:100.00px;top:945.24px;color:#999;">2021-05-16 13:33</span>
<span class="t" style="left:216.70px;top:945.24px;color:#999;">四川省体育馆</span>
</div></div>
<div class="a" style="left:257px;top:102px;width:17px;height:860px;background:#f1f1f1;"></div>
<svg class="i" style="left:261.5px;top:109.5px;" width="9" height="5" viewBox="0 0 9 5"><path d="M4.5 0.3L8.8 4.7H0.2Z" fill="#a3a3a3"/></svg>
<div class="a" style="left:259px;top:120px;width:13px;height:182.5px;background:#c1c1c1;"></div>
<div class="a" style="left:100px;top:742px;width:174px;height:33px;background:rgba(246,178,107,.66);"></div>
<div class="a" style="left:100px;top:752px;width:157px;height:13px;overflow:hidden;background:#fff">
<svg class="i" style="left:1px;top:0.5px;" width="12" height="12" viewBox="0 0 12 12"><rect width="12" height="12" rx="1" fill="#f63"/><path d="M6.00 1.90L7.18 4.68L10.18 4.94L7.90 6.92L8.59 9.86L6.00 8.30L3.41 9.86L4.10 6.92L1.82 4.94L4.82 4.68Z" fill="#fff"/></svg>
<svg class="i" style="left:14.4px;top:0.5px;" width="12" height="12" viewBox="0 0 12 12"><rect width="12" height="12" rx="1" fill="#f63"/><path d="M6.00 1.90L7.18 4.68L10.18 4.94L7.90 6.92L8.59 9.86L6.00 8.30L3.41 9.86L4.10 6.92L1.82 4.94L4.82 4.68Z" fill="#fff"/></svg>
<svg class="i" style="left:27.8px;top:0.5px;" width="12" height="12" viewBox="0 0 12 12"><rect width="12" height="12" rx="1" fill="#f63"/><path d="M6.00 1.90L7.18 4.68L10.18 4.94L7.90 6.92L8.59 9.86L6.00 8.30L3.41 9.86L4.10 6.92L1.82 4.94L4.82 4.68Z" fill="#fff"/></svg>
<svg class="i" style="left:41.2px;top:0.5px;" width="12" height="12" viewBox="0 0 12 12"><rect width="12" height="12" rx="1" fill="#f63"/><path d="M6.00 1.90L7.18 4.68L10.18 4.94L7.90 6.92L8.59 9.86L6.00 8.30L3.41 9.86L4.10 6.92L1.82 4.94L4.82 4.68Z" fill="#fff"/></svg>
<svg class="i" style="left:54.6px;top:0.5px;" width="12" height="12" viewBox="0 0 12 12"><rect width="12" height="12" rx="1" fill="#f63"/><path d="M6.00 1.90L7.18 4.68L10.18 4.94L7.90 6.92L8.59 9.86L6.00 8.30L3.41 9.86L4.10 6.92L1.82 4.94L4.82 4.68Z" fill="#fff"/></svg>
<div class="a" style="left:61.5px;top:0px;width:7px;height:13px;background:#e1e1e1;"></div>
<span class="t" style="left:75.40px;top:-0.76px;color:#777;word-spacing:2px">设施: 4.0&nbsp; 场地</span>
</div>
<div class="a" style="left:257px;top:752px;width:17px;height:13px;background:#f1f1f1;"></div>
<div class="a" style="left:100px;top:752px;width:174px;height:13px;background:rgba(111,168,220,.66);"></div>
<div class="a" style="left:100px;top:705px;width:170px;height:29px;border-radius:3px;background:#fff;box-shadow:0 1px 5px rgba(0,0,0,.28),0 0 1px rgba(0,0,0,.2)"></div>
<svg class="i" style="left:112.4px;top:733.6px;" width="12" height="8.6" viewBox="0 0 12 8.6"><path d="M0 0H12L6 8.4Z" fill="#fff"/></svg>
<span class="t b" style="letter-spacing:0.500px;left:109.40px;top:714.44px;"><span style="color:#881280">div</span><span style="color:#1a1aa6">.review-rank</span></span>
<span class="t" style="letter-spacing:-0.006px;left:213.80px;top:714.44px;color:#777;">750 × 13</span>
<div class="a" style="left:274px;top:102px;width:1px;height:860px;background:#b4b4b4;"></div>
<div class="a" style="left:275px;top:102px;width:1640px;height:27.5px;background:#f3f3f3;"></div>
<div class="a" style="left:275px;top:129px;width:1640px;height:1px;background:#cacdd1;"></div>
<svg class="i" style="left:284.4px;top:109.4px;" width="14" height="14" viewBox="0 0 14 14"><path d="M12.05 4.5V2.05Q12.05 1.05 11.05 1.05H2.1Q1.1 1.05 1.1 2.05V10.85Q1.1 11.85 2.1 11.85H4.7" stroke="#6e6e6e" stroke-width="1.15" fill="none"/><path d="M5.5 5.5L13.2 8L7.7 12.8Z" fill="#6e6e6e"/><path d="M10 10L13.3 13.3" stroke="#6e6e6e" stroke-width="1.6"/></svg>
<svg class="i" style="left:311px;top:108px;" width="16" height="16" viewBox="0 0 16 16"><rect x="3.55" y="0.65" width="10.8" height="14.6" rx="0.9" fill="none" stroke="#6e6e6e" stroke-width="1.15"/><rect x="0.65" y="5.75" width="5.65" height="9.5" rx="0.7" fill="#fff" stroke="#6e6e6e" stroke-width="1.15"/><path d="M0.6 6.1H6.3M0.6 14.6H6.3" stroke="#6e6e6e" stroke-width="1.7"/></svg>
<div class="a" style="left:337px;top:108px;width:1px;height:16px;background:#cfcfcf;"></div>
<span class="t" style="letter-spacing:-0.379px;left:356.00px;top:109.64px;color:#333;">Elements</span>
<span class="t" style="letter-spacing:-0.233px;left:426.60px;top:109.64px;color:#5a5a5a;">Console</span>
<span class="t" style="letter-spacing:-0.433px;left:492.60px;top:109.64px;color:#5a5a5a;">Sources</span>
<span class="t" style="letter-spacing:0.141px;left:557.70px;top:109.64px;color:#5a5a5a;">Network</span>
<span class="t" style="letter-spacing:-0.209px;left:626.80px;top:109.64px;color:#5a5a5a;">Performance</span>
<span class="t" style="letter-spacing:0.276px;left:716.30px;top:109.64px;color:#5a5a5a;">Memory</span>
<span class="t" style="letter-spacing:0.153px;left:784.40px;top:109.64px;color:#5a5a5a;">Application</span>
<span class="t" style="letter-spacing:-0.095px;left:868.40px;top:109.64px;color:#5a5a5a;">Security</span>
<span class="t" style="letter-spacing:0.028px;left:943.30px;top:109.64px;color:#5a5a5a;">Lighthouse</span>
<div class="a" style="left:344px;top:128px;width:71px;height:2px;background:#1a73e8;"></div>
<div class="a" style="left:1750px;top:106px;width:32px;height:20px;border:1px solid #cfcfcf;border-radius:2px;background:#f3f3f3"></div>
<svg class="i" style="left:1757px;top:111px;" width="9.4" height="9" viewBox="0 0 9.4 9"><path d="M4.7 0.2L9.3 8.8H0.1Z" fill="#f4b400"/><path d="M4.2 3H5.2V6H4.2ZM4.2 6.7H5.2V7.7H4.2Z" fill="#fff"/></svg>
<span class="t" style="left:1769.00px;top:109.84px;color:#5a5a5a;">1</span>
<div class="a" style="left:1783.8px;top:106px;width:39px;height:20px;border:1px solid #cfcfcf;border-radius:2px;background:#f3f3f3"></div>
<svg class="i" style="left:1791px;top:111.5px;" width="9" height="9" viewBox="0 0 9 9"><path d="M0.8 0H8.2Q9 0 9 0.8V6Q9 6.8 8.2 6.8H3L0 9Z" fill="#1a73e8"/><path d="M2 2.2H7M2 4.2H6" stroke="#fff" stroke-width="0.9"/></svg>
<span class="t" style="letter-spacing:-0.780px;left:1804.00px;top:109.84px;color:#5a5a5a;">12</span>
<div class="a" style="left:1829px;top:108px;width:1px;height:16px;background:#cfcfcf;"></div>
<svg class="i" style="left:1840.5px;top:108.5px;" width="15" height="15" viewBox="0 0 15 15"><g transform="translate(7.5,7.5)"><rect x="-2.1" y="-7.3" width="4.2" height="4" rx=".7" fill="#6e6e6e" transform="rotate(0)"/><rect x="-2.1" y="-7.3" width="4.2" height="4" rx=".7" fill="#6e6e6e" transform="rotate(60)"/><rect x="-2.1" y="-7.3" width="4.2" height="4" rx=".7" fill="#6e6e6e" transform="rotate(120)"/><rect x="-2.1" y="-7.3" width="4.2" height="4" rx=".7" fill="#6e6e6e" transform="rotate(180)"/><rect x="-2.1" y="-7.3" width="4.2" height="4" rx=".7" fill="#6e6e6e" transform="rotate(240)"/><rect x="-2.1" y="-7.3" width="4.2" height="4" rx=".7" fill="#6e6e6e" transform="rotate(300)"/><circle r="5.0" fill="#6e6e6e"/><circle r="2.5" fill="#f3f3f3"/></g></svg>
<svg class="i" style="left:1874.6px;top:110px;" width="3.2" height="13" viewBox="0 0 3.2 13"><circle cx="1.6" cy="1.6" r="1.5" fill="#5f6368"/><circle cx="1.6" cy="6.5" r="1.5" fill="#5f6368"/><circle cx="1.6" cy="11.4" r="1.5" fill="#5f6368"/></svg>
<svg class="i" style="left:1899px;top:111px;" width="10" height="10" viewBox="0 0 10 10"><path d="M0.3 0.3L9.7 9.7M9.7 0.3L0.3 9.7" stroke="#5f6368" stroke-width="1.5" fill="none"/></svg>
<div class="a" style="left:275px;top:130px;width:827px;height:467px;background:#fff;"></div>
<div class="a" style="left:278.3px;top:269px;width:819.7px;height:16.7px;background:#e9effa;border-radius:3.5px"></div>
<div class="a" style="left:275px;top:438px;width:826.5px;height:16.7px;background:#dfdfdf;"></div>
<span class="t" style="left:278.00px;top:438.64px;color:#5f6368;letter-spacing:0.5px">…</span>
<div class="a" style="left:275px;top:130px;width:826px;height:467px;overflow:hidden"><div class="a" style="left:-275px;top:-130px">
<span class="m" style="left:373.20px;top:136.82px;"><span class="cm">&lt;!--<span style="font-size:12px;line-height:0">评论列表</span>--&gt;</span></span>
<span class="m" style="left:373.20px;top:153.70px;"><span class="br">&lt;</span><span class="tg">div</span> <span class="an">class</span><span class="br">="</span><span class="av">reviews-items</span><span class="br">"</span><span class="br">&gt;</span></span>
<svg class="i" style="left:362.8px;top:158.53px;" width="7.4" height="4.8" viewBox="0 0 7.4 4.8"><path d="M0 0H7.4L3.7 4.8Z" fill="#727272"/></svg>
<span class="m" style="left:385.20px;top:170.58px;"><span class="br">&lt;</span><span class="tg">ul</span><span class="br">&gt;</span></span>
<svg class="i" style="left:374.8px;top:175.41px;" width="7.4" height="4.8" viewBox="0 0 7.4 4.8"><path d="M0 0H7.4L3.7 4.8Z" fill="#727272"/></svg>
<span class="m" style="left:397.20px;top:187.46px;"><span class="cm">&lt;!--<span style="font-size:12px;line-height:0">点评评论样例</span>--&gt;</span></span>
<span class="m" style="left:397.20px;top:204.34px;"><span class="br">&lt;</span><span class="tg">li</span><span class="br">&gt;</span></span>
<svg class="i" style="left:386.8px;top:209.17px;" width="7.4" height="4.8" viewBox="0 0 7.4 4.8"><path d="M0 0H7.4L3.7 4.8Z" fill="#727272"/></svg>
<span class="m" style="left:409.20px;top:221.22px;"><span class="br">&lt;</span><span class="tg">a</span> <span class="an">class</span><span class="br">="</span><span class="av">dper-photo-aside</span><span class="br">"</span> <span class="an">target</span><span class="br">="</span><span class="av">_blank</span><span class="br">"</span> <span class="an">rel</span><span class="br">="</span><span class="av">nofollow</span><span class="br">"</span> <span class="an">href</span><span class="br">="</span><span style="color:#2455cc;text-decoration:underline">/member/1241684874</span><span class="br">"</span> <span class="an">data-user-id</span><span class="br">="</span><span class="av">12416</span></span>
<svg class="i" style="left:399.7px;top:224.45px;" width="4.8" height="7.4" viewBox="0 0 4.8 7.4"><path d="M0 0L4.8 3.7L0 7.4Z" fill="#727272"/></svg>
<span class="m" style="left:398.30px;top:238.10px;"><span class="av">84874</span><span class="br">"</span> <span class="an">data-click-name</span><span class="br">="</span><span class="av"><span style="font-size:12px;line-height:0">用户头像</span>0</span><span class="br">"</span> <span class="an">data-click-title</span><span class="br">="</span><span class="av"><span style="font-size:12px;line-height:0">图片</span></span><span class="br">"&gt;</span><span class="tx">…</span><span class="br">&lt;/</span><span class="tg">a</span><span class="br">&gt;</span></span>
<span class="m" style="left:409.20px;top:254.98px;"><span class="br">&lt;</span><span class="tg">div</span> <span class="an">class</span><span class="br">="</span><span class="av">main-review</span><span class="br">"</span><span class="br">&gt;</span></span>
<svg class="i" style="left:398.8px;top:259.81px;" width="7.4" height="4.8" viewBox="0 0 7.4 4.8"><path d="M0 0H7.4L3.7 4.8Z" fill="#727272"/></svg>
<span class="m" style="left:421.20px;top:271.86px;"><span class="br">&lt;</span><span class="tg">div</span> <span class="an">class</span><span class="br">="</span><span class="av">dper-info</span><span class="br">"</span><span class="br">&gt;</span><span class="tx">…</span><span class="br">&lt;/</span><span class="tg">div</span><span class="br">&gt;</span></span>
<svg class="i" style="left:411.7px;top:275.09px;" width="4.8" height="7.4" viewBox="0 0 4.8 7.4"><path d="M0 0L4.8 3.7L0 7.4Z" fill="#727272"/></svg>
<span class="m" style="left:421.20px;top:288.74px;"><span class="br">&lt;</span><span class="tg">div</span> <span class="an">class</span><span class="br">="</span><span class="av">review-rank</span><span class="br">"</span><span class="br">&gt;</span><span class="tx">…</span><span class="br">&lt;/</span><span class="tg">div</span><span class="br">&gt;</span></span>
<svg class="i" style="left:411.7px;top:291.97px;" width="4.8" height="7.4" viewBox="0 0 4.8 7.4"><path d="M0 0L4.8 3.7L0 7.4Z" fill="#727272"/></svg>
<span class="m" style="left:421.20px;top:305.62px;"><span class="br">&lt;</span><span class="tg">div</span> <span class="an">class</span><span class="br">="</span><span class="av">review-truncated-words</span><span class="br">"</span><span class="br">&gt;</span></span>
<svg class="i" style="left:410.8px;top:310.45px;" width="7.4" height="4.8" viewBox="0 0 7.4 4.8"><path d="M0 0H7.4L3.7 4.8Z" fill="#727272"/></svg>
<span class="m" style="left:433.60px;top:322.50px;"><span class="tx">"</span></span>
<span class="m" style="left:644.80px;top:339.38px;"><span class="tx">18"</span></span>
<span class="m" style="left:433.60px;top:356.26px;"><span class="br">&lt;</span><span class="tg">svgmtsi</span> <span class="an">class</span><span class="br">="</span><span class="av">vaz8ju</span><span class="br">"</span><span class="br">&gt;</span><span class="br">&lt;/</span><span class="tg">svgmtsi</span><span class="br">&gt;</span></span>
<span class="m" style="left:433.60px;top:373.14px;"><span class="br">&lt;</span><span class="tg">svgmtsi</span> <span class="an">class</span><span class="br">="</span><span class="av">vazv5h</span><span class="br">"</span><span class="br">&gt;</span><span class="br">&lt;/</span><span class="tg">svgmtsi</span><span class="br">&gt;</span></span>
<span class="m" style="left:433.60px;top:390.02px;"><span class="tx">"<span style="font-size:12px;line-height:0">四</span>"</span></span>
<span class="m" style="left:433.60px;top:406.90px;"><span class="br">&lt;</span><span class="tg">svgmtsi</span> <span class="an">class</span><span class="br">="</span><span class="av">vazrbr</span><span class="br">"</span><span class="br">&gt;</span><span class="br">&lt;/</span><span class="tg">svgmtsi</span><span class="br">&gt;</span></span>
<span class="m" style="left:433.60px;top:423.78px;"><span class="tx">"<span style="font-size:12px;line-height:0">省</span>"</span></span>
<span class="m" style="left:433.60px;top:440.66px;"><span class="br">&lt;</span><span class="tg">svgmtsi</span> <span class="an">class</span><span class="br">="</span><span class="av">vaz12z</span><span class="br">"</span><span class="br">&gt;</span><span class="br">&lt;/</span><span class="tg">svgmtsi</span><span class="br">&gt;</span><span style="color:#777;font-style:italic"> == $0</span></span>
<span class="m" style="left:433.60px;top:457.54px;"><span class="tx">"<span style="font-size:12px;line-height:0">育馆</span>"</span></span>
<span class="m" style="left:433.60px;top:474.42px;"><span class="br">&lt;</span><span class="tg">svgmtsi</span> <span class="an">class</span><span class="br">="</span><span class="av">vazv5h</span><span class="br">"</span><span class="br">&gt;</span><span class="br">&lt;/</span><span class="tg">svgmtsi</span><span class="br">&gt;</span></span>
<span class="m" style="left:433.60px;top:491.30px;"><span class="br">&lt;</span><span class="tg">svgmtsi</span> <span class="an">class</span><span class="br">="</span><span class="av">vaz0uu</span><span class="br">"</span><span class="br">&gt;</span><span class="br">&lt;/</span><span class="tg">svgmtsi</span><span class="br">&gt;</span></span>
<span class="m" style="left:433.60px;top:508.18px;"><span class="tx">"<span style="font-size:12px;line-height:0">了光良</span>"</span></span>
<span class="m" style="left:433.60px;top:525.06px;"><span class="br">&lt;</span><span class="tg">svgmtsi</span> <span class="an">class</span><span class="br">="</span><span class="av">vazdov</span><span class="br">"</span><span class="br">&gt;</span><span class="br">&lt;/</span><span class="tg">svgmtsi</span><span class="br">&gt;</span></span>
<span class="m" style="left:433.60px;top:541.94px;"><span class="br">&lt;</span><span class="tg">svgmtsi</span> <span class="an">class</span><span class="br">="</span><span class="av">vazrco</span><span class="br">"</span><span class="br">&gt;</span><span class="br">&lt;/</span><span class="tg">svgmtsi</span><span class="br">&gt;</span></span>
<span class="m" style="left:433.60px;top:558.82px;"><span class="br">&lt;</span><span class="tg">svgmtsi</span> <span class="an">class</span><span class="br">="</span><span class="av">vazf5g</span><span class="br">"</span><span class="br">&gt;</span><span class="br">&lt;/</span><span class="tg">svgmtsi</span><span class="br">&gt;</span></span>
<span class="m" style="left:433.60px;top:575.70px;"><span class="tx">"<span style="font-size:12px;line-height:0">会。</span></span></span>
<span class="m" style="left:433.60px;top:592.58px;"><span class="tx">"</span></span>
<div class="a" style="left:419.6px;top:303.6px;width:240px;height:17px;border:1px dotted #8a8a8a"></div>
</div></div>
<div class="a" style="left:1101px;top:130px;width:17.5px;height:467px;background:#f1f1f1;"></div>
<svg class="i" style="left:1104.8px;top:137.5px;" width="9" height="5" viewBox="0 0 9 5"><path d="M4.5 0.3L8.8 4.7H0.2Z" fill="#505050"/></svg>
<svg class="i" style="left:1104.8px;top:585.5px;" width="9" height="5" viewBox="0 0 9 5"><path d="M4.5 4.7L8.8 0.3H0.2Z" fill="#505050"/></svg>
<div class="a" style="left:1102.7px;top:245px;width:13px;height:89.5px;background:#c1c1c1;"></div>
<div class="a" style="left:275px;top:597px;width:843px;height:1px;background:#cacdd1;"></div>
<div class="a" style="left:275px;top:598px;width:843px;height:23px;background:#fff;"></div>
<div class="a" style="left:275px;top:598px;width:26.5px;height:23px;background:#f3f3f3;"></div>
<div class="a" style="left:1092px;top:598px;width:26.5px;height:23px;background:#f3f3f3;"></div>
<span class="t" style="left:282.50px;top:602.24px;color:#888;letter-spacing:0.8px">…</span>
<span class="t" style="left:1099.00px;top:602.24px;color:#333;letter-spacing:0.8px">…</span>
<span class="t" style="letter-spacing:0.207px;left:309.50px;top:602.84px;"><span style="color:#881280">html</span></span>
<span class="t" style="letter-spacing:0.042px;left:347.90px;top:602.84px;"><span style="color:#881280">body</span></span>
<span class="t" style="letter-spacing:0.113px;left:388.40px;top:602.84px;"><span style="color:#881280">div</span><span style="color:#994500">#index-main</span></span>
<span class="t" style="letter-spacing:0.054px;left:484.50px;top:602.84px;"><span style="color:#881280">div</span><span style="color:#3c4043">#review-list</span><span style="color:#994500">.review-list</span></span>
<span class="t" style="letter-spacing:0.100px;left:631.90px;top:602.84px;"><span style="color:#881280">div</span><span style="color:#994500">.review-list-container</span></span>
<span class="t" style="letter-spacing:0.093px;left:772.60px;top:602.84px;"><span style="color:#881280">div</span><span style="color:#994500">.review-list-main</span></span>
<span class="t" style="letter-spacing:0.010px;left:889.60px;top:602.84px;"><span style="color:#881280">div</span><span style="color:#994500">.reviews-wrapper</span></span>
<div class="a" style="left:1009px;top:598px;width:83px;height:23px;overflow:hidden"><span class="t" style="letter-spacing:-0.185px;left:0.50px;top:4.84px;"><span style="color:#881280">div</span><span style="color:#994500">.reviews-items</span></span></div>
<div class="a" style="left:1118.5px;top:130px;width:1px;height:491px;background:#cacdd1;"></div>
<div class="a" style="left:1119.5px;top:130px;width:796px;height:26px;background:#f3f3f3;"></div>
<div class="a" style="left:1119.5px;top:156px;width:796px;height:1px;background:#cacdd1;"></div>
<span class="t" style="letter-spacing:-0.448px;left:1128.60px;top:136.64px;color:#333;">Styles</span>
<span class="t" style="letter-spacing:0.028px;left:1178.40px;top:136.64px;color:#5a5a5a;">Computed</span>
<span class="t" style="letter-spacing:-0.105px;left:1254.70px;top:136.64px;color:#5a5a5a;">Layout</span>
<span class="t" style="letter-spacing:-0.328px;left:1310.00px;top:136.64px;color:#5a5a5a;">Event Listeners</span>
<span class="t" style="letter-spacing:-0.100px;left:1408.00px;top:136.64px;color:#5a5a5a;">DOM Breakpoints</span>
<span class="t" style="letter-spacing:-0.120px;left:1521.80px;top:136.64px;color:#5a5a5a;">Properties</span>
<span class="t" style="letter-spacing:-0.135px;left:1594.80px;top:136.64px;color:#5a5a5a;">Accessibility</span>
<div class="a" style="left:1119.5px;top:155px;width:49.5px;height:2px;background:#1a73e8;"></div>
<div class="a" style="left:1119.5px;top:157px;width:796px;height:27px;background:#f3f3f3;"></div>
<div class="a" style="left:1121.5px;top:161px;width:645.5px;height:19.5px;background:#fff;"></div>
<span class="t" style="letter-spacing:-0.112px;left:1126.00px;top:163.84px;color:#757575;">Filter</span>
<span class="m" style="left:1778.40px;top:163.17px;color:#444;">:hov</span>
<span class="m" style="left:1814.00px;top:163.17px;color:#444;">.cls</span>
<svg class="i" style="left:1854px;top:165.5px;" width="11" height="11" viewBox="0 0 11 11"><path d="M5.5 0V11M0 5.5H11" stroke="#5f6368" stroke-width="1.6" fill="none"/></svg>
<svg class="i" style="left:1865.8px;top:175.6px;" width="4.2" height="4.2" viewBox="0 0 4.2 4.2"><path d="M4.2 0V4.2H0Z" fill="#5f6368"/></svg>
<svg class="i" style="left:1878.8px;top:164px;" width="15.4" height="13" viewBox="0 0 15.4 13"><rect x="0.7" y="0.7" width="14" height="11.6" fill="none" stroke="#5f6368" stroke-width="1.4"/><path d="M10.4 0.7V12.3" stroke="#5f6368" stroke-width="1.4"/><path d="M7.6 3.4V9.6L3.4 6.5Z" fill="#5f6368"/></svg>
<div class="a" style="left:1119.5px;top:184px;width:783.5px;height:437px;background:#fff;"></div>
<span class="m" style="left:1123.30px;top:186.47px;"><span style="color:#6b6b6b">element.style {</span></span>
<span class="m" style="left:1123.30px;top:202.67px;"><span class="tx">}</span></span>
<div class="a" style="left:1119.5px;top:219.6px;width:784px;height:1px;background:#dcdcdc;"></div>
<span class="m" style="left:1123.30px;top:223.47px;"><span class="tx">svgmtsi[class^="vaz"] {</span></span>
<span class="m src" style="left:1749.00px;top:223.47px;">ef214d96b88…c937f.css:1</span>
<span class="m" style="left:1140.90px;top:239.27px;"><span class="pn">width</span><span class="pv">:</span><span class="pv"> </span><span class="pv">14px;</span></span>
<span class="m" style="left:1140.90px;top:253.37px;"><span class="pn">height</span><span class="pv">:</span><span class="pv"> </span><span class="pv">24px;</span></span>
<span class="m" style="left:1140.90px;top:267.37px;"><span class="pn">margin-top</span><span class="pv">:</span><span class="pv"> </span><span class="pv">-14px;</span></span>
<span class="m" style="left:1140.90px;top:281.37px;"><span class="pn">background-image</span><span class="pv">: url(</span><span class="lk">//s3plus.meituan.net/v1/mss_0a06a47…/svgtextcss/b830b69….svg</span><span class="pv">);</span></span>
<span class="m" style="left:1140.90px;top:295.37px;"><span class="pn">background-repeat</span><span class="pv">:</span><svg width="13.9" height="8" viewBox="0 0 13.9 8" style="display:inline-block;vertical-align:-0.5px;overflow:visible"><path d="M3.6 0.4L8.6 4L3.6 7.6Z" fill="#6e6e6e"/></svg><span class="pv">no-repeat;</span></span>
<span class="m" style="left:1140.90px;top:309.37px;"><span class="pn">display</span><span class="pv">:</span><span class="pv"> </span><span class="pv">inline-block;</span></span>
<span class="m" style="left:1140.90px;top:323.37px;"><span class="pn">vertical-align</span><span class="pv">:</span><span class="pv"> </span><span class="pv">middle;</span></span>
<span class="m" style="left:1123.30px;top:337.87px;"><span class="tx">}</span></span>
<div class="a" style="left:1119.5px;top:355.5px;width:784px;height:1px;background:#dcdcdc;"></div>
<span class="m" style="left:1123.30px;top:358.07px;"><span class="tx">.vaz12z {</span></span>
<span class="m src" style="left:1749.00px;top:358.07px;">ef214d96b88…c937f.css:1</span>
<span class="m" style="left:1140.90px;top:374.07px;"><span class="pn">background</span><span class="pv">:</span><svg width="13.9" height="8" viewBox="0 0 13.9 8" style="display:inline-block;vertical-align:-0.5px;overflow:visible"><path d="M3.6 0.4L8.6 4L3.6 7.6Z" fill="#6e6e6e"/></svg><span class="pv">-154.0px -1551.0px;</span></span>
<span class="m" style="left:1123.30px;top:388.07px;"><span class="tx">}</span></span>
<div class="a" style="left:1119.5px;top:406px;width:784px;height:1px;background:#dcdcdc;"></div>
<span class="m" style="left:1123.30px;top:409.07px;"><span class="tx">* {</span></span>
<span class="m src" style="left:1749.00px;top:409.07px;">review-list…a82a9.css:1</span>
<span class="m" style="left:1140.90px;top:425.07px;"><span class="pn">margin</span><span class="pv">:</span><svg width="13.9" height="8" viewBox="0 0 13.9 8" style="display:inline-block;vertical-align:-0.5px;overflow:visible"><path d="M3.6 0.4L8.6 4L3.6 7.6Z" fill="#6e6e6e"/></svg><span class="pv">0;</span></span>
<span class="m" style="left:1140.90px;top:439.07px;"><span class="pn">padding</span><span class="pv">:</span><svg width="13.9" height="8" viewBox="0 0 13.9 8" style="display:inline-block;vertical-align:-0.5px;overflow:visible"><path d="M3.6 0.4L8.6 4L3.6 7.6Z" fill="#6e6e6e"/></svg><span class="pv">0;</span></span>
<span class="m" style="left:1140.90px;top:453.07px;"><span class="pn">outline</span><span class="pv">:</span><svg width="13.9" height="8" viewBox="0 0 13.9 8" style="display:inline-block;vertical-align:-0.5px;overflow:visible"><path d="M3.6 0.4L8.6 4L3.6 7.6Z" fill="#6e6e6e"/></svg><span class="pv">none;</span></span>
<span class="m st" style="left:1140.90px;top:467.07px;"><span class="pn">-webkit-tap-highlight-color</span><span class="pv">:</span><span class="pv"> </span><span style="display:inline-block;width:10px;height:10px;margin:0 1.5px 0 2px;border:1px solid #9a9a9a;vertical-align:-1.5px;background:linear-gradient(135deg,#fff 50%,#ddd 50%)"></span><span class="pv">rgba(0,0,0,0);</span></span>
<span class="m" style="left:1140.90px;top:481.07px;"><span class="pn">-webkit-tap-highlight-color</span><span class="pv">:</span><span class="pv"> </span><span style="display:inline-block;width:10px;height:10px;margin:0 1.5px 0 2px;border:1px solid #9a9a9a;vertical-align:-1.5px;background:linear-gradient(135deg,#fff 50%,#ddd 50%)"></span><span class="pv">transparent;</span></span>
<span class="m" style="left:1123.30px;top:495.27px;"><span class="tx">}</span></span>
<div class="a" style="left:1119.5px;top:513px;width:784px;height:1px;background:#dcdcdc;"></div>
<span class="m" style="left:1123.30px;top:516.07px;"><span class="tx">* {</span></span>
<span class="m src" style="left:1749.00px;top:516.07px;">index.min.a…cc46b.css:1</span>
<span class="m st" style="left:1140.90px;top:531.87px;"><span class="pn">padding</span><span class="pv">:</span><svg width="13.9" height="8" viewBox="0 0 13.9 8" style="display:inline-block;vertical-align:-0.5px;overflow:visible"><path d="M3.6 0.4L8.6 4L3.6 7.6Z" fill="#6e6e6e"/></svg><span class="pv">0;</span></span>
<span class="m st" style="left:1140.90px;top:546.07px;"><span class="pn">margin</span><span class="pv">:</span><svg width="13.9" height="8" viewBox="0 0 13.9 8" style="display:inline-block;vertical-align:-0.5px;overflow:visible"><path d="M3.6 0.4L8.6 4L3.6 7.6Z" fill="#6e6e6e"/></svg><span class="pv">0;</span></span>
<span class="m" style="left:1123.30px;top:560.27px;"><span class="tx">}</span></span>
<div class="a" style="left:1119.5px;top:578px;width:784px;height:1px;background:#dcdcdc;"></div>
<div class="a" style="left:1119.5px;top:579px;width:784px;height:24px;background:#f5f5f5;"></div>
<span class="t" style="letter-spacing:0.111px;left:1124.00px;top:584.24px;color:#5a5a5a;">Inherited from</span>
<span class="m" style="left:1205.60px;top:585.27px;color:#c80000;">div.review-truncated-words</span>
<div class="a" style="left:1119.5px;top:603px;width:784px;height:1px;background:#dcdcdc;"></div>
<span class="m" style="left:1123.30px;top:605.87px;"><span class="tx">.reviews-items&gt;ul&gt;li .main-review .review-truncated-words {</span></span>
<span class="m src" style="left:1749.00px;top:605.87px;">review-list…a82a9.css:1</span>
<div class="a" style="left:1903px;top:157px;width:17px;height:464px;background:#f1f1f1;"></div>
<svg class="i" style="left:1906.3px;top:160.5px;" width="9" height="5" viewBox="0 0 9 5"><path d="M4.5 0.3L8.8 4.7H0.2Z" fill="#a3a3a3"/></svg>
<svg class="i" style="left:1906.3px;top:611.5px;" width="9" height="5" viewBox="0 0 9 5"><path d="M4.5 4.7L8.8 0.3H0.2Z" fill="#505050"/></svg>
<div class="a" style="left:1905.2px;top:174px;width:13px;height:127px;background:#c1c1c1;"></div>
<div class="a" style="left:1911px;top:352.5px;width:12px;height:49.5px;border:1.6px solid #6e6e6e;border-radius:4.5px;background:linear-gradient(180deg,#fff 0,#fff 28%,#ee3030 28%,#ee3030 100%)"></div>
<div class="a" style="left:275px;top:621px;width:1640px;height:1px;background:#cacdd1;"></div>
<div class="a" style="left:275px;top:622px;width:1640px;height:26px;background:#f3f3f3;"></div>
<div class="a" style="left:275px;top:648px;width:1640px;height:1px;background:#cacdd1;"></div>
<svg class="i" style="left:289.8px;top:629.8px;" width="3.2" height="11.6" viewBox="0 0 3.2 11.6"><circle cx="1.6" cy="1.5" r="1.45" fill="#5f6368"/><circle cx="1.6" cy="5.8" r="1.45" fill="#5f6368"/><circle cx="1.6" cy="10.1" r="1.45" fill="#5f6368"/></svg>
<span class="t" style="letter-spacing:-0.262px;left:312.80px;top:628.84px;color:#5a5a5a;">Console</span>
<span class="t" style="letter-spacing:-0.064px;left:374.80px;top:628.84px;color:#333;">What's New</span>
<svg class="i" style="left:444.6px;top:631.2px;" width="7" height="7" viewBox="0 0 7 7"><path d="M0.3 0.3L6.7 6.7M6.7 0.3L0.3 6.7" stroke="#5f6368" stroke-width="1.3" fill="none"/></svg>
<div class="a" style="left:365px;top:646.4px;width:92px;height:2.4px;background:#1a73e8;"></div>
<svg class="i" style="left:1898.8px;top:630.2px;" width="10.4" height="10.4" viewBox="0 0 10.4 10.4"><path d="M0.3 0.3L10.1 10.1M10.1 0.3L0.3 10.1" stroke="#5a5a5a" stroke-width="1.7" fill="none"/></svg>
<div class="a" style="left:275px;top:649px;width:1640px;height:26px;background:#f3f3f3;"></div>
<div class="a" style="left:275px;top:675px;width:1640px;height:1px;background:#cacdd1;"></div>
<span class="t" style="letter-spacing:0.056px;left:290.40px;top:655.64px;color:#303030;">Highlights from the Chrome 90 update</span>
<div class="a" style="left:275px;top:676px;width:1628px;height:286px;background:#fff;"></div>
<div class="a" style="left:293px;top:690px;width:567.5px;height:47px;border:1px solid #c9c9c9;background:#fff"></div>
<span class="t" style="letter-spacing:0.245px;left:302.90px;top:695.36px;font-size:13.2px;color:#1a73e8;">New CSS Flexbox debugging tools</span>
<span class="t" style="letter-spacing:0.231px;left:302.90px;top:715.95px;font-size:12.2px;color:#808080;">Debug and inspect CSS Flexbox with the new CSS Flexbox debugging tools.</span>
<div class="a" style="left:293px;top:741px;width:567.5px;height:47px;border:1px solid #c9c9c9;background:#fff"></div>
<span class="t" style="letter-spacing:0.258px;left:302.90px;top:746.36px;font-size:13.2px;color:#1a73e8;">New Core Web Vitals overlay</span>
<span class="t" style="letter-spacing:0.304px;left:302.90px;top:766.95px;font-size:12.2px;color:#808080;">Visualize page performance with the new Core Web Vitals overlay.</span>
<div class="a" style="left:293px;top:792px;width:567.5px;height:47px;border:1px solid #c9c9c9;background:#fff"></div>
<span class="t" style="letter-spacing:0.232px;left:302.90px;top:797.36px;font-size:13.2px;color:#1a73e8;">Report Trusted Web Activity issues</span>
<span class="t" style="letter-spacing:0.233px;left:302.90px;top:817.95px;font-size:12.2px;color:#808080;">Debug Trusted Web Activity issues in the Issues panel.</span>
<div class="a" style="left:293px;top:843px;width:567.5px;height:47px;border:1px solid #c9c9c9;background:#fff"></div>
<span class="t" style="letter-spacing:0.251px;left:302.90px;top:848.36px;font-size:13.2px;color:#1a73e8;">New Trust Token pane</span>
<span class="t" style="letter-spacing:0.293px;left:302.90px;top:868.95px;font-size:12.2px;color:#808080;">New Trust Token pane in the Application Panel.</span>
<div class="a" style="left:293px;top:894px;width:567.5px;height:47px;border:1px solid #c9c9c9;background:#fff"></div>
<span class="t" style="letter-spacing:0.299px;left:302.90px;top:899.36px;font-size:13.2px;color:#1a73e8;">Emulate the CSS color-gamut media feature</span>
<span class="t" style="letter-spacing:0.409px;left:302.90px;top:919.95px;font-size:12.2px;color:#808080;">Emulate color-gamut to test different color standards.</span>
<div class="a" style="left:293px;top:945px;width:567.5px;height:47px;border:1px solid #c9c9c9;background:#fff"></div>
<span class="t" style="letter-spacing:0.213px;left:302.90px;top:950.36px;font-size:13.2px;color:#1a73e8;">Format strings as (valid) JavaScript string literals in the Console</span>
<div class="a" style="left:909px;top:696px;width:260px;height:199.5px;background:#2a7af8;box-shadow:0 1px 3px rgba(0,0,0,.4);overflow:hidden"><svg class="i" style="left:0;top:0" width="260" height="200" viewBox="0 0 260 200"><g stroke="#5c9bfb" stroke-width=".7" opacity=".6"><path d="M4 0V200"/><path d="M18 0V200"/><path d="M32 0V200"/><path d="M46 0V200"/><path d="M64.2 0V200"/><path d="M82 0V200"/><path d="M96 0V200"/><path d="M110 0V200"/><path d="M124 0V200"/><path d="M138 0V200"/><path d="M152 0V200"/><path d="M166 0V200"/><path d="M181 0V200"/><path d="M195 0V200"/><path d="M209 0V200"/><path d="M223 0V200"/><path d="M237 0V200"/><path d="M251 0V200"/><path d="M0 2.5H260"/><path d="M0 16H260"/><path d="M0 30H260"/><path d="M0 44H260"/><path d="M0 58.8H260"/><path d="M0 73H260"/><path d="M0 87H260"/><path d="M0 101H260"/><path d="M0 115H260"/><path d="M0 129H260"/><path d="M0 143H260"/><path d="M0 157H260"/><path d="M0 171H260"/><path d="M0 185H260"/></g><g fill="none" stroke="#4f92fa" stroke-width=".9"><circle cx="64.2" cy="58.8" r="62"/><circle cx="64.2" cy="58.8" r="76"/><path d="M5 0L125 118M125 0L5 118M64.2 58.8L260 250M0 22L40 -10"/></g><g fill="none" stroke="#a9c9fc" stroke-width="2.9"><circle cx="64.2" cy="58.8" r="31.4"/><circle cx="64.2" cy="58.8" r="44.4"/><ellipse cx="66.5" cy="58.5" rx="97" ry="92.5"/><path d="M64 15.6H150"/><path d="M-2 36L20.5 66.5"/><path d="M98 88.5L61 148"/></g><rect x="100.6" y="83.2" width="53" height="33" rx="7.5" fill="#1c4fb0" opacity=".35"/><rect x="101.2" y="82" width="52.3" height="32.6" rx="7.5" fill="#df1d1d"/><path d="M121 91.2V106.4L137.7 98.8Z" fill="#fff"/><g fill="none" stroke="#fff" stroke-width="6.3"><circle cx="148.4" cy="144.2" r="17.6"/><path d="M164.6 151.2L143.2 186.6" stroke-linecap="butt"/><ellipse cx="211.2" cy="155.5" rx="23.9" ry="28.8"/></g></svg><span class="t" style="left:177.6px;top:87.8px;font-size:27.5px;color:#fff;-webkit-text-stroke:0.5px #fff;transform:scaleX(1.15);transform-origin:0 0">new</span></div>
<div class="a" style="left:1903px;top:676px;width:17px;height:286px;background:#f1f1f1;"></div>
<svg class="i" style="left:1906px;top:682.2px;" width="9" height="5" viewBox="0 0 9 5"><path d="M4.5 0.3L8.8 4.7H0.2Z" fill="#a3a3a3"/></svg>
<div class="a" style="left:1904.8px;top:693px;width:13px;height:269px;background:#c1c1c1;"></div>
<div class="a" style="left:1796px;top:948px;width:110px;height:32px;border-radius:15.5px;background:#2e313c;box-shadow:0 0 5px rgba(0,0,0,.35)"></div>
<svg class="i" style="left:1805.6px;top:956.4px;" width="7.6" height="9" viewBox="0 0 7.6 9"><path d="M3.8 9V1.2M0.6 4.2L3.8 0.8L7 4.2" stroke="#3db8ff" stroke-width="1.5" fill="none"/></svg>
<span class="t" style="letter-spacing:-1.194px;left:1819.00px;top:951.22px;font-size:13.5px;color:#fff;-webkit-text-stroke:.3px #fff">0.2</span>
<span class="t" style="letter-spacing:-0.391px;left:1835.60px;top:954.66px;font-size:10.5px;color:#d5d8e0;">K/s</span>
<div class="a" style="left:1855px;top:939px;width:58px;height:58px;border-radius:50%;background:#5d6373;border:1.6px solid #3b3e4a"></div>
<svg class="i" style="left:1855px;top:939px;" width="58" height="58" viewBox="0 0 58 58"><path d="M30 4.4A24.6 24.6 0 0 1 53.8 23" stroke="#2fe0c5" stroke-width="2.2" fill="none"/></svg>
<div class="a" style="left:1868.2px;top:958.8px;width:10.8px;height:1.8px;background:#fff;"></div>
<svg class="i" style="left:1876px;top:959.5px;" width="4" height="3" viewBox="0 0 4 3"><path d="M3.6 0L1.6 3" stroke="#fff" stroke-width="1.8"/></svg>
<svg class="i" style="left:1886.5px;top:959px;" width="5" height="3.2" viewBox="0 0 5 3.2"><path d="M4.6 0L2.2 3.2M4 0V3.2" stroke="#fff" stroke-width="1.5" fill="none"/></svg>
</body></html>
